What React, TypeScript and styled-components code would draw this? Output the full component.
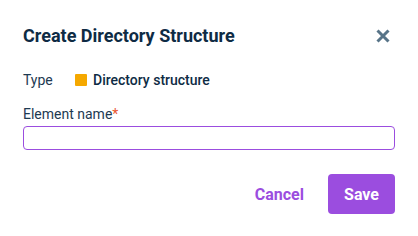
import React from "react";
import styled, { createGlobalStyle } from "styled-components";

const Global = createGlobalStyle`
  html, body { margin: 0; padding: 0; background: #ffffff; }
  body { font-family: Roboto, "Liberation Sans", sans-serif; }
  * { box-sizing: border-box; }
`;

const Dialog = styled.div`
  width: 418px;
  height: 236px;
  background: #ffffff;
  padding: 24px 23px 20px 23px;
  display: flex;
  flex-direction: column;
`;

const Header = styled.div`
  display: flex;
  align-items: center;
  justify-content: space-between;
  height: 24px;
`;

const Title = styled.h2`
  margin: 0;
  font-size: 18px;
  line-height: 24px;
  font-weight: 700;
  color: #0e2b44;
`;

const CloseButton = styled.button`
  border: none;
  background: none;
  padding: 0;
  width: 24px;
  height: 24px;
  display: flex;
  align-items: center;
  justify-content: center;
  cursor: pointer;
`;

const TypeRow = styled.div`
  display: flex;
  align-items: center;
  margin-top: 22px;
  height: 20px;
  font-size: 14px;
`;

const Label = styled.span`
  color: #1d3a52;
  width: 52px;
`;

const Swatch = styled.span<{ $color: string }>`
  width: 12px;
  height: 12px;
  border-radius: 1px;
  background: ${(p) => p.$color};
  margin-right: 6px;
`;

const TypeValue = styled.span`
  color: #0e2b44;
  font-weight: 500;
`;

const Field = styled.div`
  display: flex;
  flex-direction: column;
  margin-top: 15px;
`;

const FieldLabel = styled.label`
  font-size: 14px;
  line-height: 18px;
  color: #1d3a52;
  margin-bottom: 3px;
`;

const Required = styled.span`
  color: #e8552f;
`;

const Input = styled.input`
  height: 24px;
  border: 1px solid #9b4ddf;
  border-radius: 4px;
  outline: none;
  padding: 0 8px;
  font-size: 14px;
  font-family: inherit;
`;

const Footer = styled.div`
  display: flex;
  justify-content: flex-end;
  align-items: center;
  gap: 24px;
  margin-top: 24px;
`;

const TextButton = styled.button`
  border: none;
  background: none;
  padding: 0;
  font-family: inherit;
  font-size: 16px;
  font-weight: 700;
  color: #9b4ddf;
  cursor: pointer;
`;

const PrimaryButton = styled.button`
  border: none;
  background: #9b4ddf;
  color: #ffffff;
  font-family: inherit;
  font-size: 16px;
  font-weight: 700;
  width: 67px;
  height: 40px;
  border-radius: 4px;
  cursor: pointer;
`;

export default function App() {
  return (
    <>
      <Global />
      <Dialog>
        <Header>
          <Title>Create Directory Structure</Title>
          <CloseButton aria-label="Close">
            <svg width="16" height="16" viewBox="0 0 16 16">
              <path d="M2.5 2.5 L13.5 13.5 M13.5 2.5 L2.5 13.5" stroke="#587488" strokeWidth="3" strokeLinecap="butt" />
            </svg>
          </CloseButton>
        </Header>
        <TypeRow>
          <Label>Type</Label>
          <Swatch $color="#f5a800" />
          <TypeValue>Directory structure</TypeValue>
        </TypeRow>
        <Field>
          <FieldLabel>
            Element name<Required>*</Required>
          </FieldLabel>
          <Input />
        </Field>
        <Footer>
          <TextButton>Cancel</TextButton>
          <PrimaryButton>Save</PrimaryButton>
        </Footer>
      </Dialog>
    </>
  );
}
